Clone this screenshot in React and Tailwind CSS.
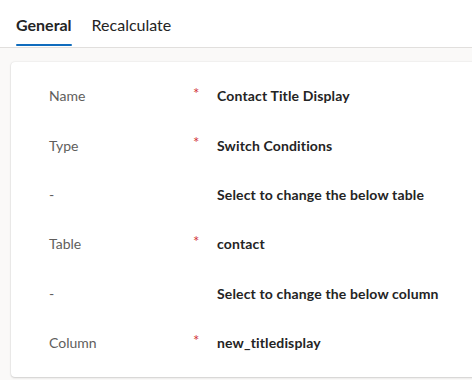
import React from 'react';

const rows = [
  { label: 'Name', required: true, value: 'Contact Title Display' },
  { label: 'Type', required: true, value: 'Switch Conditions' },
  { label: '-', required: false, value: 'Select to change the below table' },
  { label: 'Table', required: true, value: 'contact' },
  { label: '-', required: false, value: 'Select to change the below column' },
  { label: 'Column', required: true, value: 'new_titledisplay' },
];

export default function App() {
  return (
    <div
      className="w-[472px] h-[380px] overflow-hidden bg-[#faf9f8] text-[14px]"
      style={{ fontFamily: 'Lato, "Noto Sans", sans-serif' }}
    >
      <div className="h-[48px] bg-white border-b border-[#e1dfdd] flex items-end px-[16px] gap-[20px] text-[16px]">
        <div className="relative h-full flex items-center pt-[2px] font-bold text-[#242424]">
          General
          <div className="absolute left-0 right-0 bottom-[1px] h-[2px] bg-[#0f6cbd] rounded-sm" />
        </div>
        <div className="h-full flex items-center pt-[2px] text-[#242424]">Recalculate</div>
      </div>
      <div className="pt-[14px] pl-[11px]">
        <div className="w-[480px] h-[315px] bg-white rounded-[4px] shadow-[0_0_2px_rgba(0,0,0,0.12),0_1px_2px_rgba(0,0,0,0.14)] pt-[9px]">
          {rows.map((r, i) => (
            <div key={i} className="h-[49.4px] flex items-center">
              <div className="w-[182px] pl-[38px] text-[#605e5c]">{r.label}</div>
              <div className="w-[24px] text-[15px] text-[#d13438] -mt-[5px]">{r.required ? '*' : ''}</div>
              <div className="font-bold text-[#242424] tracking-[0.15px]">{r.value}</div>
            </div>
          ))}
        </div>
      </div>
    </div>
  );
}
